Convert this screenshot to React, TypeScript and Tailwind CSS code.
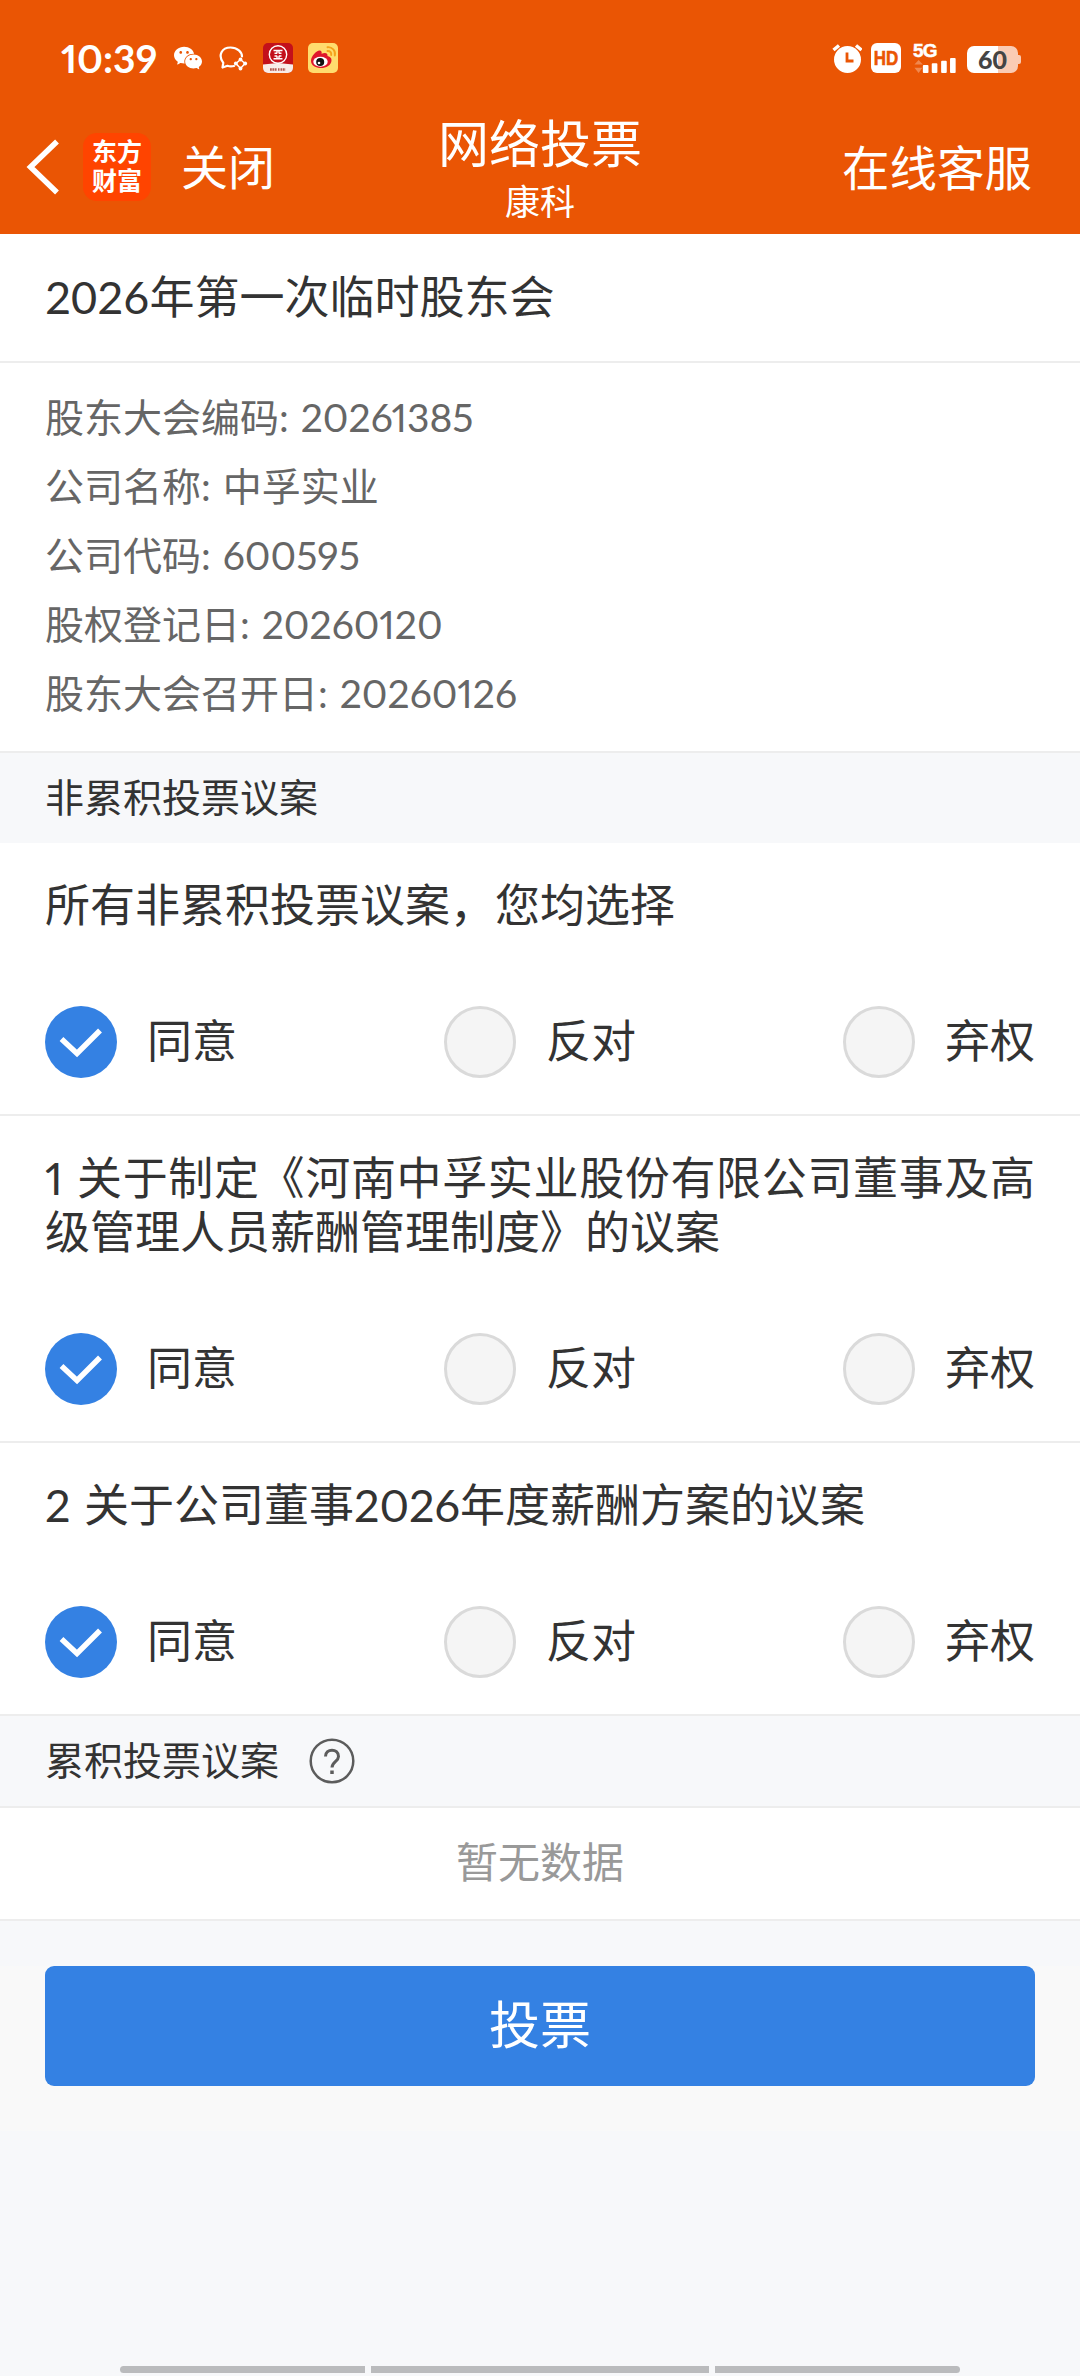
import { AiFillWechat } from "react-icons/ai";

const details = [
  ["股东大会编码", "20261385"],
  ["公司名称", "中孚实业"],
  ["公司代码", "600595"],
  ["股权登记日", "20260120"],
  ["股东大会召开日", "20260126"],
];

const proposals = [
  "所有非累积投票议案，您均选择",
  "1 关于制定《河南中孚实业股份有限公司董事及高级管理人员薪酬管理制度》的议案",
  "2 关于公司董事2026年度薪酬方案的议案",
];

const choices = ["同意", "反对", "弃权"];

function StatusBar() {
  return (
    <div className="flex h-[78px] items-end justify-between pb-[5px] pl-[61px] pr-[59px]">
      <div className="flex h-[30px] items-center">
        <span className="w-[113px] text-[39px] leading-[28px] font-bold proportional-nums">
          10:39
        </span>
        <AiFillWechat className="h-8 w-8 -translate-x-[2px]" />
        <svg className="ml-3 h-[30px] w-[30px]" viewBox="0 0 30 30" fill="none" stroke="currentColor" strokeWidth="2.2">
          <path d="M16 23c-2.500.6-4.500.5-6.500-.2L4.500 24.500l.8-4.700C-.5 12 4 4.500 12.500 4.500c7 0 11.500 4.500 11.500 9" strokeLinecap="round" strokeLinejoin="round" />
          <path d="M22.500 16.500 27 20.500 22.500 25.500 18 20.500Z" strokeWidth="1.500" />
          <g fill="currentColor" stroke="none">
            <circle cx="22.500" cy="16.500" r="1.900" />
            <circle cx="27.200" cy="20.500" r="1.900" />
            <circle cx="22.500" cy="25.500" r="1.900" />
            <circle cx="17.800" cy="20.500" r="1.900" />
          </g>
        </svg>
        <svg className="ml-[15px] h-[30px] w-[30px] rounded-[5px]" viewBox="0 0 30 30">
          <rect width="30" height="30" fill="#c3101b" />
          <path d="M0 21.500 15 20l15 1.500V30H0Z" fill="#f8ece8" />
          <circle cx="15" cy="11.500" r="8.700" fill="#c3101b" stroke="#fff" strokeWidth="1.400" />
          <path d="M10.500 7.500h9M10.500 15.700h9M11.500 10.200h2.500M16 10.200h2.500M11.500 13h2.500M16 13h2.500M14 7.500v3M16 7.500v3M14 12.800v2.900M16 12.800v2.900" stroke="#fff" strokeWidth="1.400" />
          <path d="M7 26.500h7M15 26.500h1.500M17.500 26.500h5" stroke="#b45a50" strokeWidth="2.400" strokeDasharray="1.800 .6" />
        </svg>
        <svg className="ml-[15px] h-[30px] w-[30px] rounded-[5px]" viewBox="0 0 30 30" fill="none">
          <rect width="30" height="30" fill="#ffdc6e" />
          <path d="M3 18c0-5 5.500-10.500 8.500-10.500 2 0 2.500 1.500 2 3.300 3.500-1.500 6.500-1 6 2.200 3 .7 4 2.300 4 4.200 0 5-5.500 7.800-10.500 7.800S3 22.500 3 18Z" fill="#e0162b" />
          <ellipse cx="12.500" cy="18.700" rx="7.200" ry="5" fill="#fff" />
          <circle cx="12.200" cy="19" r="4" fill="#111" />
          <circle cx="11" cy="20" r="1.300" fill="#fff" />
          <path d="M19.500 4.200c4.500-.5 8.500 3.500 7.300 8.300M19.500 8c2.500-.2 4.200 1.500 3.700 4" stroke="#f5a21b" strokeWidth="1.900" strokeLinecap="round" />
        </svg>
      </div>

      <div className="flex h-[30px] items-end">
        <svg className="h-[30px] w-[30px]" viewBox="0 0 30 30">
          <circle cx="15.500" cy="16.500" r="13.500" fill="#fff" />
          <path d="M1.500 7 7 2.500M29.500 7 24 2.500" stroke="#fff" strokeWidth="3.500" />
          <path d="M15 9.500v8.500h6.500" fill="none" stroke="#ea5504" strokeWidth="2.800" />
        </svg>
        <div className="ml-[9px] flex h-[30px] w-[30px] items-center justify-center rounded-[6px] bg-white font-['Liberation_Sans'] text-[17px] leading-none font-bold text-[#ea5504]">
          <span className="scale-y-115 [-webkit-text-stroke:0.5px_#ea5504]">HD</span>
        </div>
        <div className="ml-3 flex h-[30px] w-[45px] flex-col justify-between">
          <span className="-mt-[3px] h-[18px] font-['Liberation_Sans'] text-[19px] leading-[21px] font-bold tracking-[-0.8px] [-webkit-text-stroke:0.5px_#fff]">
            5G
          </span>
          <svg className="h-4 w-[45px]" viewBox="0 0 45 16" fill="#fff">
            <path d="M0 7 4.500 2 9 7ZM0 10.500h8.500L4.500 16Z" opacity=".3" />
            <rect x="9" y="7.500" width="6" height="8.500" rx="1" />
            <rect x="18.500" y="5.500" width="6" height="10.500" rx="1" />
            <rect x="28.500" y="3" width="6" height="13" rx="1" />
            <rect x="38" y="0" width="6" height="16" rx="1" />
          </svg>
        </div>
        <div className="ml-[9px] flex items-center">
          <div className="flex h-[27px] w-[51px] items-center justify-center rounded-[7px] bg-linear-to-r from-white from-60% to-[#facbb4] to-60% text-[25px] leading-[27px] font-black text-[#444]">
            60
          </div>
          <span className="h-[9px] w-[3px] rounded-r-[2px] bg-[#facbb4]" />
        </div>
      </div>
    </div>
  );
}

function NavBar() {
  return (
    <div className="grid h-[156px] grid-cols-[1fr_auto_1fr]">
      <div className="flex items-center pl-[26px] pt-[22px]">
        <svg className="h-[56px] w-[34px]" viewBox="0 0 34 56" fill="none" stroke="#fff" strokeWidth="5.500">
          <path d="M31 2.500 4.500 28 31 53.500" />
        </svg>
        <div className="ml-[23px] flex h-[68px] w-[68px] flex-col items-center justify-center rounded-[14px] bg-[#ff4400] pb-[2px] text-[25px] leading-[29px] font-bold">
          <span>东方</span>
          <span>财富</span>
        </div>
        <span className="ml-[30px] text-[47px] leading-none">关闭</span>
      </div>
      <div className="flex flex-col items-center pt-9">
        <h1 className="text-[51px] leading-[60px]">网络投票</h1>
        <span className="mt-[7px] text-[35px] leading-[40px]">康科</span>
      </div>
      <div className="flex items-center justify-end pr-[48px] pt-[24px] text-[47.500px] leading-none">
        在线客服
      </div>
    </div>
  );
}

function Radio({ label, checked }: { label: string; checked: boolean }) {
  return (
    <label className="flex items-center gap-[30px]">
      {checked ? (
        <span className="flex h-[72px] w-[72px] items-center justify-center rounded-full bg-[#3481e3]">
          <svg className="h-[72px] w-[72px]" viewBox="0 0 72 72" fill="none" stroke="#fff" strokeWidth="5.500">
            <path d="M16.500 33 32 47.500 55 24.500" />
          </svg>
        </span>
      ) : (
        <span className="h-[72px] w-[72px] rounded-full border-[3px] border-[#dadada] bg-[#f5f5f5]" />
      )}
      <span className="pb-[2px] text-[45px] leading-[70px]">{label}</span>
    </label>
  );
}

function Proposal({ title }: { title: string }) {
  return (
    <section className="border-b-2 border-[#ededed] bg-white px-[45px] pt-[35px] pb-[36px]">
      <p className="text-justify text-[45px] leading-[54px] proportional-nums [word-spacing:2px]">{title}</p>
      <div className="mt-[74px] flex justify-between">
        {choices.map((choice, i) => (
          <Radio key={choice} label={choice} checked={i === 0} />
        ))}
      </div>
    </section>
  );
}

export default function App() {
  return (
    <div
      lang="zh-CN"
      className="flex h-[2376px] w-[1080px] flex-col overflow-hidden bg-[#f7f8fa] font-[Lato,'Noto_Sans_CJK_SC',sans-serif] text-[#333]"
    >
      <header className="h-[234px] bg-[#ea5504] text-white">
        <StatusBar />
        <NavBar />
      </header>

      <main>
        <h2 className="h-[129px] border-b-2 border-[#ededed] bg-white px-[45px] text-[45px] leading-[126px]">
          2026年第一次临时股东会
        </h2>

        <dl className="h-[390px] border-b-2 border-[#ededed] bg-white px-[45px] pt-5 text-[39px] leading-[69px] text-[#666]">
          {details.map(([name, value]) => (
            <div key={name} className="flex gap-3">
              <dt>{name}:</dt>
              <dd className="proportional-nums">{value}</dd>
            </div>
          ))}
        </dl>

        <h3 className="h-[90px] px-[45px] text-[39px] leading-[88px]">非累积投票议案</h3>

        {proposals.map((title) => (
          <Proposal key={title} title={title} />
        ))}

        <h3 className="flex h-[92px] items-center gap-[30px] border-b-2 border-[#ededed] px-[45px] text-[39px]">
          <span className="pb-0.5">累积投票议案</span>
          <svg className="h-[46px] w-[46px]" viewBox="0 0 46 46" fill="none" stroke="#5c5c5c" strokeWidth="2.500">
            <circle cx="23" cy="23" r="21.300" />
            <path d="M16.500 18.500c0-8.500 13-8.500 13 0 0 5-6.500 5.500-6.500 11" strokeWidth="3" />
            <path d="M23 32.500v3.500" strokeWidth="3.500" />
          </svg>
        </h3>
        <p className="h-[113px] border-b-2 border-[#ededed] bg-white text-center text-[42px] leading-[108px] text-[#999]">
          暂无数据
        </p>

        <div className="mt-[45px] bg-[#f9f9f9] px-[45px] pb-[45px]">
          <button className="block h-[120px] w-full rounded-[9px] bg-[#3481e3] pb-[3px] text-[51px] leading-[117px] text-white">
            投票
          </button>
        </div>
      </main>

      <nav className="mt-auto mb-[3px] flex justify-center gap-[6px]">
        <span className="h-[7px] w-[245px] rounded-l-full bg-[#babbbd]" />
        <span className="h-[7px] w-[338px] bg-[#babbbd]" />
        <span className="h-[7px] w-[245px] rounded-r-full bg-[#babbbd]" />
      </nav>
    </div>
  );
}
